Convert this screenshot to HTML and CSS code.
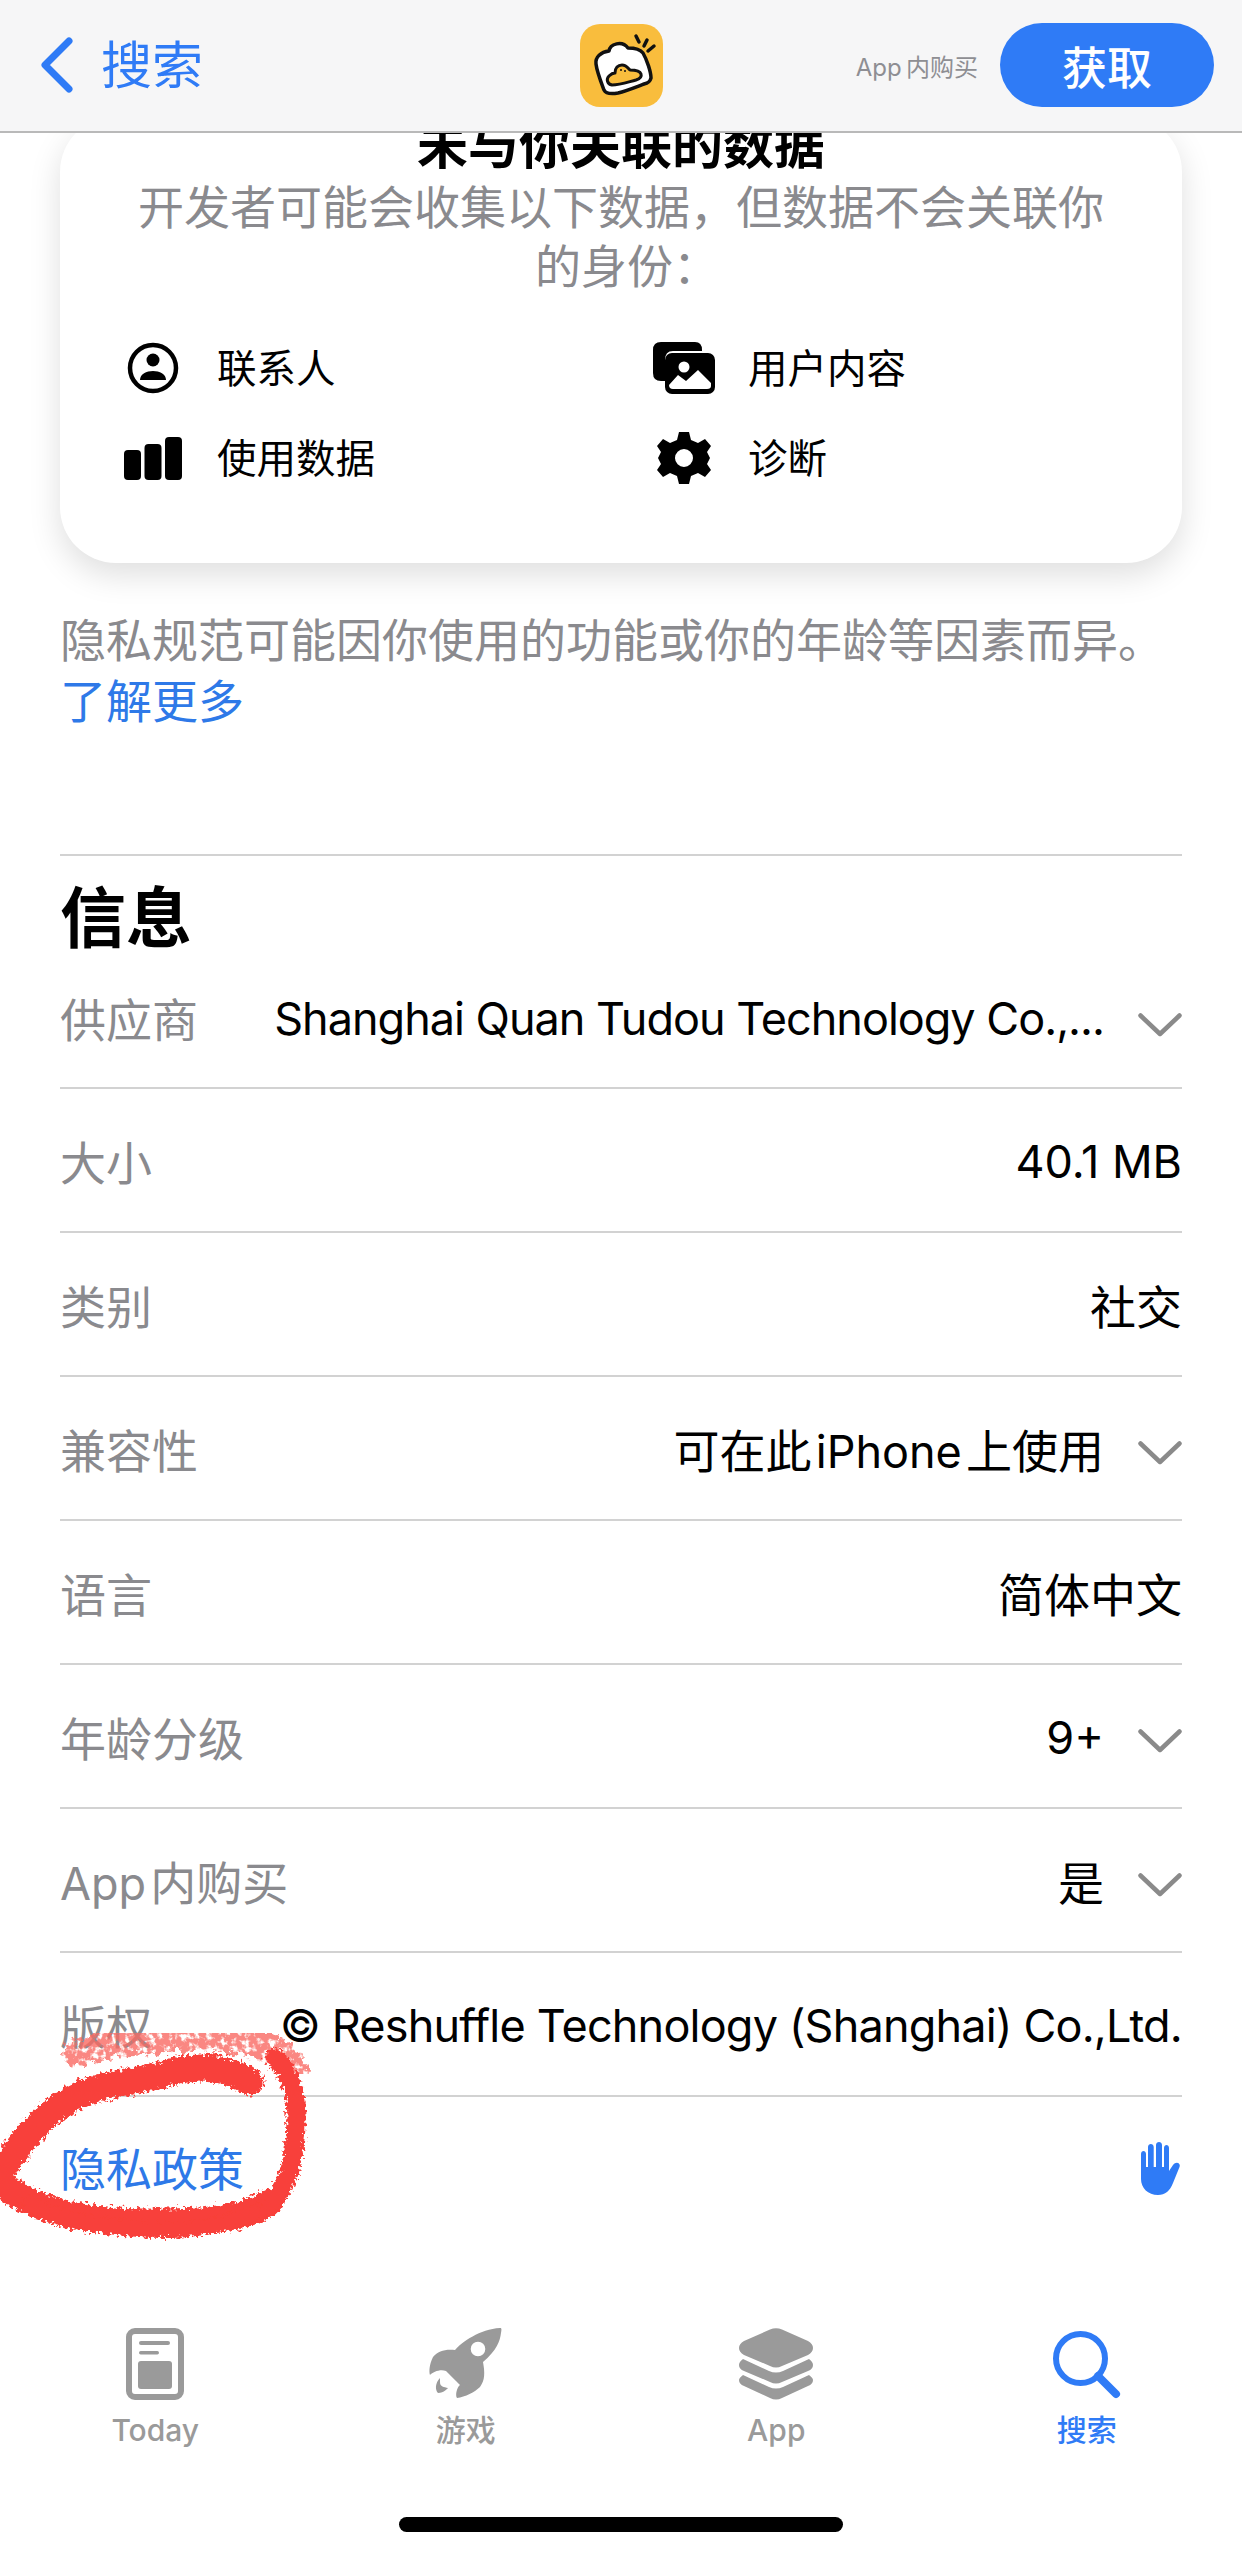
FILE: index.html
```html
<!DOCTYPE html>
<html lang="zh-CN">
<head>
<meta charset="utf-8">
<title>App 详情</title>
<link rel="stylesheet" href="styles.css">
</head>
<body>
<div class="page">
  <header class="nav">
    <div class="nav-back">
      <svg class="nav-chevron" viewBox="0 0 34 56"><path d="M29 4 L5 28 L29 52"/></svg>
      <span>搜索</span>
    </div>
    <svg class="nav-logo" viewBox="0 0 83 83">
      <rect width="83" height="83" rx="20" fill="#f9bd3d"/>
      <path class="logo-body" d="M16 40 C15 33 21 28 29 27 C30 20 42 16 48 24 C54 24 60 25 63 29 C67 36 71 48 71 54 C70 58 68 59 64 60 C56 63 46 67 38 69 C32 70 26 70 24 66 C21 58 17 48 16 40 Z"/>
      <path class="logo-cloud" d="M32 61 C27 60 26 55 29 52 C31 50 33 49 35 49 C35 44 38 41 42 41 C46 41 48 44 50 46 C55 46 60 47 61 50 C62 53 59 55 56 56 C48 58 40 61 32 61 Z"/>
      <circle class="logo-eye" cx="41" cy="46" r="1"/>
      <circle class="logo-eye" cx="45" cy="47" r="1"/>
      <path class="logo-rays" d="M56 12 L59 18 M67 16 L64 22 M74 22 L68 27"/>
    </svg>
    <div class="nav-action">
      <span class="nav-note">App&#8201;内购买</span>
      <span class="nav-button">获取</span>
    </div>
  </header>

  <main class="content">
    <section class="privacy-card">
      <h3 class="privacy-title">未与你关联的数据</h3>
      <p class="privacy-desc">开发者可能会收集以下数据，但数据不会关联你<br>的身份<span class="colon">：</span></p>
      <ul class="privacy-grid">
        <li class="privacy-item">
          <svg class="privacy-icon" viewBox="0 0 62 52">
            <circle cx="31" cy="26" r="23" fill="none" stroke="#000" stroke-width="4.5"/>
            <circle cx="31" cy="18" r="6.5"/>
            <path d="M18 38 C18 26 44 26 44 38 Z"/>
          </svg>
          <span>联系人</span>
        </li>
        <li class="privacy-item">
          <svg class="privacy-icon" viewBox="0 0 62 52">
            <path d="M8 0 H42 Q49 0 49 8 V9 H20 Q12 9 12 18 V39 H8 Q0 39 0 31 V8 Q0 0 8 0 Z"/>
            <rect x="12" y="11" width="50" height="41" rx="7"/>
            <path fill="#fff" d="M16 43 L25 33 L33 39 L45 28 L58 41 V44 Q58 47 54 47 H20 Q16 47 16 43 Z"/>
            <circle cx="31" cy="25" r="5.5" fill="#fff"/>
          </svg>
          <span>用户内容</span>
        </li>
        <li class="privacy-item">
          <svg class="privacy-icon" viewBox="0 0 62 52">
            <rect x="2" y="18" width="17" height="30" rx="4"/>
            <rect x="22.5" y="12" width="17" height="36" rx="4"/>
            <rect x="43" y="5" width="17" height="43" rx="4"/>
          </svg>
          <span>使用数据</span>
        </li>
        <li class="privacy-item">
          <svg class="privacy-icon" viewBox="0 0 62 52">
            <path fill-rule="evenodd" d="M26 0 H36 L38 8 L45 11 L52 7 L58 14 L54 20 L57 26 L54 32 L58 38 L52 45 L45 41 L38 44 L36 52 H26 L24 44 L17 41 L10 45 L4 38 L8 32 L5 26 L8 20 L4 14 L10 7 L17 11 L24 8 Z M31 17 A9 9 0 1 0 31 35 A9 9 0 1 0 31 17 Z"/>
          </svg>
          <span>诊断</span>
        </li>
      </ul>
    </section>

    <p class="privacy-note">隐私规范可能因你使用的功能或你的年龄等因素而异。<br><a class="link">了解更多</a></p>

    <section class="info">
      <h2 class="info-title">信息</h2>
      <div class="row row-first">
        <span class="label">供应商</span>
        <span class="value"><span class="latin latin-tighter">Shanghai Quan Tudou Technology Co.,...</span><svg class="row-chevron" viewBox="0 0 44 24"><path d="M2.500 2.500 L22 21 L41.500 2.500"/></svg></span>
      </div>
      <div class="row">
        <span class="label">大小</span>
        <span class="value"><span class="latin">40.1 MB</span></span>
      </div>
      <div class="row">
        <span class="label">类别</span>
        <span class="value">社交</span>
      </div>
      <div class="row">
        <span class="label">兼容性</span>
        <span class="value"><span>可在此&#8202;<span class="latin-inline">iPhone</span>&#8202;上使用</span><svg class="row-chevron" viewBox="0 0 44 24"><path d="M2.500 2.500 L22 21 L41.500 2.500"/></svg></span>
      </div>
      <div class="row">
        <span class="label">语言</span>
        <span class="value">简体中文</span>
      </div>
      <div class="row">
        <span class="label">年龄分级</span>
        <span class="value"><span class="latin">9+</span><svg class="row-chevron" viewBox="0 0 44 24"><path d="M2.500 2.500 L22 21 L41.500 2.500"/></svg></span>
      </div>
      <div class="row">
        <span class="label"><span class="latin-inline">App</span>&#8202;内购买</span>
        <span class="value">是<svg class="row-chevron" viewBox="0 0 44 24"><path d="M2.500 2.500 L22 21 L41.500 2.500"/></svg></span>
      </div>
      <div class="row">
        <span class="label">版权</span>
        <span class="value"><span class="latin latin-tight">© Reshuffle Technology (Shanghai) Co.,Ltd.</span></span>
      </div>
      <div class="row row-last">
        <a class="link link-policy">隐私政策</a>
        <svg class="hand" viewBox="0 0 42 54">
          <path d="M1 12 C1 8 6 8 6 12 V25 H8 V5 C8 1 13.700 1 13.700 5 V25 H16 V3 C16 -1 22 -1 22 3 V25 H24 V6 C24 2 29 2 29 6 V29 L33 23 C36 19 41 21 39.500 25 L33 41 C30 49 25 53 18 53 C8 53 1 46 1 37 Z"/>
        </svg>
      </div>
    </section>
  </main>

  <nav class="tabs">
    <div class="tab">
      <svg class="tab-icon" viewBox="0 0 58 72">
        <rect x="3" y="3" width="52" height="66" rx="6" fill="none" stroke="#9a9a9a" stroke-width="6"/>
        <rect x="13" y="13" width="31" height="4" rx="2"/>
        <rect x="13" y="23" width="20" height="3.5" rx="1.7"/>
        <rect x="12" y="33" width="34" height="28" rx="3"/>
      </svg>
      <span>Today</span>
    </div>
    <div class="tab">
      <svg class="tab-icon" viewBox="9 13 74 72">
        <path fill-rule="evenodd" d="M80 13 C82 13 81.500 15 81 18 C80 26 77 35 63 47 C65 58 65 65 60 72 C55 77 45 82 37 83 C35 80 37 72 40 70 L26 56 C20 54 13 57 10 60 C9 57 9 50 13 42 C18 36 25 34 35 35 C42 27 60 14 80 13 Z M58 26.700 A7.300 7.300 0 1 0 58 41.300 A7.300 7.300 0 1 0 58 26.700 Z"/>
        <path d="M20 63 C15 68 15 75 18 78 C24 78 28 73 28 73 C24 72 20 72 20 67 Z"/>
      </svg>
      <span>游戏</span>
    </div>
    <div class="tab">
      <svg class="tab-icon" viewBox="0 0 74 72">
        <path d="M31 1.500 Q37 -1 43 1.500 L69 13 Q74 16 74 20 Q74 24 69 27 L43 38 Q37 41 31 38 L5 27 Q0 24 0 20 Q0 16 5 13 Z"/>
        <path d="M4 31 L30 43 Q37 46 44 43 L70 31 Q74 34 74 37 Q74 41 69 43 L43 54 Q37 57 31 54 L5 43 Q0 41 0 37 Q0 34 4 31 Z"/>
        <path d="M4 47 L30 59 Q37 62 44 59 L70 47 Q74 50 74 52 Q74 56 69 58 L43 70 Q37 73 31 70 L5 58 Q0 56 0 52 Q0 50 4 47 Z"/>
      </svg>
      <span>App</span>
    </div>
    <div class="tab tab-active">
      <svg class="tab-icon" viewBox="0 0 68 68">
        <circle cx="27.500" cy="27.500" r="24.500" fill="none" stroke="#2f7bf6" stroke-width="6"/>
        <path d="M45 45 L63 63" fill="none" stroke="#2f7bf6" stroke-width="8" stroke-linecap="round"/>
      </svg>
      <span>搜索</span>
    </div>
  </nav>
  <div class="home-zone"><div class="home-bar"></div></div>

  <svg class="scribble" viewBox="0 0 320 260">
    <defs>
      <filter id="rough" x="-10%" y="-10%" width="120%" height="120%">
        <feTurbulence type="fractalNoise" baseFrequency="0.3" numOctaves="3" seed="4" result="grain"/>
        <feDisplacementMap in="SourceGraphic" in2="grain" scale="11" xChannelSelector="R" yChannelSelector="G"/>
      </filter>
      <filter id="chalk" x="-10%" y="-10%" width="120%" height="120%">
        <feTurbulence type="fractalNoise" baseFrequency="0.16" numOctaves="3" seed="9" result="grain"/>
        <feColorMatrix in="grain" type="matrix" values="0 0 0 0 0  0 0 0 0 0  0 0 0 0 0  0 0 0 5 -1.500" result="speckle"/>
        <feDisplacementMap in="SourceGraphic" in2="grain" scale="16" xChannelSelector="R" yChannelSelector="G" result="moved"/>
        <feComposite in="moved" in2="speckle" operator="in"/>
      </filter>
    </defs>
    <g fill="none" stroke-linecap="round" stroke-linejoin="round">
      <path class="scribble-faint" filter="url(#chalk)" d="M77 63 C100 55 125 50 150 50 C175 46 195 46 217 47 C240 48 255 52 267 57 C280 62 288 70 293 80"/>
      <g filter="url(#rough)">
        <path class="scribble-main" d="M250 92 C235 82 218 78 200 78 C180 78 165 84 150 88 C125 92 105 95 83 103 C65 112 52 120 40 132 C25 148 10 168 -4 190 C15 205 35 217 70 225 C110 233 160 233 200 231 C230 229 255 222 270 212"/>
        <path class="scribble-low" d="M30 214 C70 234 120 240 170 240 C205 239 235 232 262 220"/>
        <path class="scribble-right" d="M270 214 C282 200 288 190 292 170 C296 150 297 130 295 110 C292 90 285 78 275 68"/>
      </g>
    </g>
  </svg>
</div>
</body>
</html>
```

FILE: styles.css
```css
* { box-sizing: border-box; }

html, body { margin: 0; padding: 0; background: #fff; }

body {
  font-family: "Inter", "Noto Sans CJK SC", sans-serif;
  color: #000;
}

.page {
  position: relative;
  width: 1242px;
  height: 2556px;
  overflow: hidden;
  display: flex;
  flex-direction: column;
}

/* Top navigation bar */
.nav {
  flex: none;
  height: 133px;
  padding: 0 28px 1px 28px;
  background: #f6f6f7;
  border-bottom: 2px solid #b9b9b9;
  display: grid;
  grid-template-columns: 1fr auto 1fr;
  align-items: center;
}

.nav-back {
  display: flex;
  align-items: center;
  gap: 27px;
  margin-left: 12px;
  color: #2f7bf6;
  font-size: 51px;
  line-height: 60px;
}

.nav-back span { margin-top: 2px; }

.nav-chevron {
  width: 34px;
  height: 56px;
  fill: none;
  stroke: #2f7bf6;
  stroke-width: 7;
  stroke-linecap: round;
  stroke-linejoin: round;
}

.nav-logo { width: 83px; height: 83px; }
.logo-body { fill: #fff; stroke: #111; stroke-width: 3.5; stroke-linejoin: round; }
.logo-cloud { fill: #f9bd3d; stroke: #111; stroke-width: 3; stroke-linejoin: round; }
.logo-eye { fill: #111; }
.logo-rays { fill: none; stroke: #111; stroke-width: 3.5; stroke-linecap: round; }

.nav-action {
  display: flex;
  align-items: center;
  justify-content: flex-end;
  gap: 22px;
}

.nav-note { color: #8e8e93; font-size: 24px; }

.nav-button {
  width: 214px;
  height: 84px;
  border-radius: 42px;
  background: #2f7bf6;
  color: #fff;
  font-size: 45px;
  font-weight: 500;
  display: flex;
  align-items: center;
  justify-content: center;
}

/* Scrolled content */
.content {
  flex: 1;
  min-height: 0;
  overflow: hidden;
  padding: 0 60px;
}

.privacy-card {
  margin-top: -17px;
  height: 447px;
  border-radius: 56px;
  background: #fff;
  box-shadow: 0 12px 32px rgba(0, 0, 0, 0.13);
  text-align: center;
}

.privacy-title {
  margin: 0;
  height: 62px;
  font-size: 51px;
  line-height: 59px;
  font-weight: 700;
}

.privacy-desc {
  height: 118px;
  margin: 0 0 27px;
  color: #8a8a8e;
  font-size: 46px;
  line-height: 59px;
}

/* The colon sits centred in its em box, as in Traditional Chinese setting */
.colon {
  font-family: "Noto Sans CJK TC", sans-serif;
  line-height: 1;
  margin-right: -12px;
}

.privacy-grid {
  list-style: none;
  margin: 0;
  padding: 0 0 0 62px;
  display: grid;
  grid-template-columns: 531px 1fr;
  grid-auto-rows: 90px;
  text-align: left;
}

.privacy-item {
  display: flex;
  align-items: center;
  gap: 33px;
  font-size: 39.500px;
}

.privacy-item span { margin-bottom: 6px; }

.privacy-icon { width: 62px; height: 52px; flex: none; }

.privacy-note {
  margin: 47px 0 122px;
  color: #8a8a8e;
  font-size: 46px;
  line-height: 61px;
}

.link { color: #2e79e8; }
.link-policy { margin-bottom: 6px; }

/* Information table */
.info { border-top: 2px solid #d2d2d2; }

.info-title {
  margin: 24px 0 0;
  font-size: 66px;
  line-height: 76px;
  font-weight: 700;
}

.row {
  height: 144px;
  border-bottom: 2px solid #d2d2d2;
  display: flex;
  align-items: center;
  justify-content: space-between;
  font-size: 46px;
}

.row-first { height: 133px; padding-bottom: 9px; }
.row-last { border-bottom: 0; }

.label { color: #8a8a8e; }

.latin { font-size: 45px; margin-top: 2px; }
.latin-inline { font-size: 45px; }
.latin-tight { letter-spacing: -0.8px; }
.latin-tighter { letter-spacing: -1px; }

.value {
  display: flex;
  align-items: center;
  gap: 34px;
  white-space: nowrap;
}

.row-chevron {
  width: 44px;
  height: 24px;
  margin-top: 10px;
  fill: none;
  stroke: #8a8a8a;
  stroke-width: 4.5;
  stroke-linecap: round;
  stroke-linejoin: round;
}

.row-first .row-chevron { margin-top: 16px; }

.hand { width: 42px; height: 54px; fill: #2f7bf6; }

/* Bottom tabs */
.tabs {
  flex: none;
  display: grid;
  grid-template-columns: repeat(4, 1fr);
  height: 122px;
}

.tab {
  display: flex;
  flex-direction: column;
  align-items: center;
  justify-content: space-between;
  color: #9a9a9a;
  font-size: 30px;
  font-weight: 500;
  line-height: 40px;
}

.tab-icon { height: 72px; width: 74px; fill: #9a9a9a; }
.tab-active { color: #2f7bf6; }
.tab-active .tab-icon { fill: none; width: 68px; height: 68px; margin-top: 3px; }

.home-zone {
  flex: none;
  height: 106px;
  padding-top: 67px;
  display: flex;
  justify-content: center;
}

.home-bar {
  width: 444px;
  height: 15px;
  border-radius: 8px;
  background: #000;
}

/* Hand-drawn red marker over the table */
.scribble {
  position: absolute;
  left: 0;
  top: 1990px;
  width: 320px;
  height: 260px;
  overflow: visible;
  pointer-events: none;
}

.scribble-main { stroke: #f8403a; stroke-width: 27; }
.scribble-low { stroke: #f8403a; stroke-width: 16; }
.scribble-right { stroke: #f8403a; stroke-width: 19; }
.scribble-faint { stroke: #f96a63; stroke-width: 28; opacity: 0.8; }
```
